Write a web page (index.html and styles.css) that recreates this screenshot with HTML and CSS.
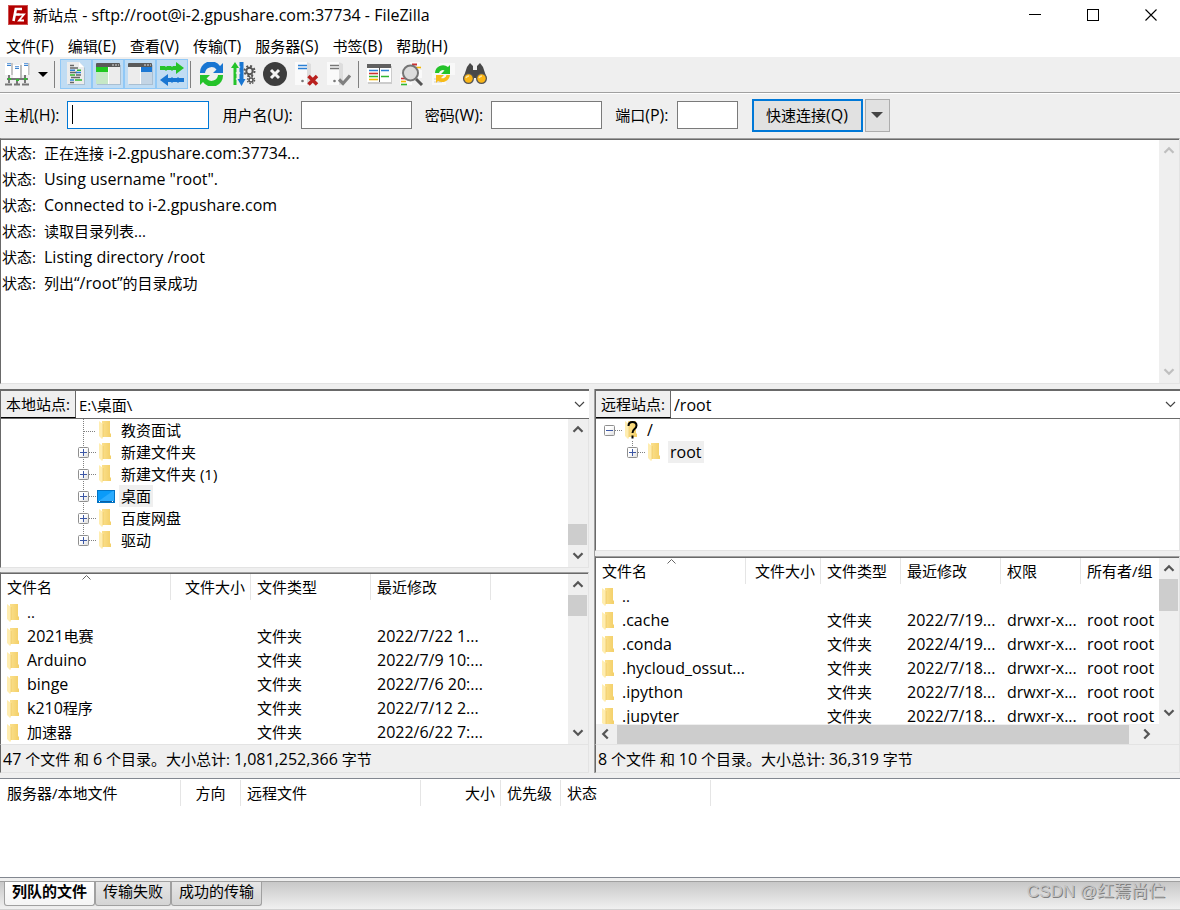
FILE: index.html
```html
<!DOCTYPE html>
<html lang="zh-CN">
<head>
<meta charset="utf-8">
<title>FileZilla</title>
<link rel="stylesheet" href="styles.css">
</head>
<body>
<svg class="defs" aria-hidden="true">
  <defs>
    <linearGradient id="gold" x1="0" x2="1" y1="0" y2="0"><stop offset="0" stop-color="#fbe08c"/><stop offset="1" stop-color="#f3cf68"/></linearGradient>
    <linearGradient id="screen" x1="0" x2="1" y1="0" y2="1"><stop offset="0.45" stop-color="#0a9bf9"/><stop offset="0.5" stop-color="#2bacff"/></linearGradient>
    <linearGradient id="box" x1="0" x2="1" y1="0" y2="1"><stop offset="0.4" stop-color="#fff"/><stop offset="1" stop-color="#dcdcdc"/></linearGradient>
  </defs>
  <symbol id="folder" viewBox="0 0 13 18"><path d="M3 0h8v12.500h1V16H3z" fill="url(#gold)"/><path d="M0 0l4 3v14l-1 1-3-3z" fill="#ffedb0"/><path d="M4 3v13" stroke="#e9bf55" stroke-width=".6"/></symbol>
  <symbol id="desktop" viewBox="0 0 18 13"><rect x=".5" y=".5" width="17" height="12" fill="url(#screen)" stroke="#0273c4"/><path d="M1 11.500h16" stroke="#0a5fa4" /><path d="M2 11.500h1M15 11.500h1" stroke="#fff"/></symbol>
  <symbol id="branch" viewBox="0 0 18 22"><path d="M5.500 0v22M6 12.500h12" fill="none" stroke="#808080" stroke-dasharray="1 1"/></symbol>
  <symbol id="plus" viewBox="0 0 18 22"><path d="M5.500 0v22M11 11.500h7" fill="none" stroke="#808080" stroke-dasharray="1 1"/><rect x=".5" y="6.500" width="10" height="10" rx="1" fill="url(#box)" stroke="#8f8f8f"/><path d="M2 11.500h7M5.500 8v7" stroke="#3c57a5"/></symbol>
  <symbol id="plus-last" viewBox="0 0 18 22"><path d="M5.500 0v7M11 11.500h7" fill="none" stroke="#808080" stroke-dasharray="1 1"/><rect x=".5" y="6.500" width="10" height="10" rx="1" fill="url(#box)" stroke="#8f8f8f"/><path d="M2 11.500h7M5.500 8v7" stroke="#3c57a5"/></symbol>
  <symbol id="minus" viewBox="0 0 18 22"><path d="M11 11.500h7" fill="none" stroke="#808080" stroke-dasharray="1 1"/><rect x=".5" y="6.500" width="10" height="10" rx="1" fill="url(#box)" stroke="#8f8f8f"/><path d="M2 11.500h7" stroke="#3c57a5"/></symbol>
  <symbol id="up" viewBox="0 0 10 8"><path d="M1 6l4-4 4 4" fill="none" stroke="currentColor" stroke-width="2"/></symbol>
  <symbol id="down" viewBox="0 0 10 8"><path d="M1 2l4 4 4-4" fill="none" stroke="currentColor" stroke-width="2"/></symbol>
  <symbol id="left" viewBox="0 0 8 10"><path d="M6 1L2 5l4 4" fill="none" stroke="currentColor" stroke-width="2"/></symbol>
  <symbol id="right" viewBox="0 0 8 10"><path d="M2 1l4 4-4 4" fill="none" stroke="currentColor" stroke-width="2"/></symbol>
  <symbol id="chevron" viewBox="0 0 11 7"><path d="M1 1l4.500 4.500L10 1" fill="none" stroke="#444" stroke-width="1.200"/></symbol>
  <symbol id="sort" viewBox="0 0 9 5"><path d="M.5 4.500l4-4 4 4" fill="none" stroke="#666"/></symbol>
  <symbol id="tri" viewBox="0 0 10 5"><path d="M0 0h10L5 5z" fill="currentColor"/></symbol>
</svg>

<header class="titlebar">
  <svg class="logo" width="20" height="20" viewBox="0 0 20 20"><rect width="20" height="20" fill="#b30000"/><rect x=".5" y=".5" width="19" height="19" fill="none" stroke="#e8a0a0" stroke-dasharray="1 1"/><path d="M5.500 16L7.800 4H14M6.500 9.500h5" fill="none" stroke="#fff" stroke-width="2.600"/><path d="M10.500 9.500h5.500l-5 6h5" fill="none" stroke="#fff" stroke-width="1.800"/></svg>
  <h1>新站点<span class="en"> - sftp://root@i-2.gpushare.com:37734 - FileZilla</span></h1>
  <button class="winbtn" aria-label="最小化"><svg width="12" height="12"><path d="M0 5.500h12" stroke="#000"/></svg></button>
  <button class="winbtn" aria-label="最大化"><svg width="12" height="12"><rect x=".5" y=".5" width="11" height="11" fill="none" stroke="#000"/></svg></button>
  <button class="winbtn" aria-label="关闭"><svg width="12" height="12"><path d="M.5.500l11 11M11.500.500l-11 11" stroke="#000" stroke-width="1.100"/></svg></button>
</header>

<nav class="menubar">
  <button>文件<span class="en">(F)</span></button><button>编辑<span class="en">(E)</span></button><button>查看<span class="en">(V)</span></button><button>传输<span class="en">(T)</span></button><button>服务器<span class="en">(S)</span></button><button>书签<span class="en">(B)</span></button><button>帮助<span class="en">(H)</span></button>
</nav>

<div class="toolbar" role="toolbar">
  <button class="site" aria-label="站点管理器">
    <svg width="25" height="24" viewBox="0 0 25 24"><path d="M0 1h7v12H0zM17 1h7v12h-7z" fill="#fff"/><path d="M6 1h2v12H6zM23 1h1.500v12H23z" fill="#c4c4c4"/><path d="M8 3h8v14H8z" fill="#fff"/><path d="M15 3h2v14h-2z" fill="#bbb"/><path d="M2 3.500h4M19 3.500h4M10 6.500h4M2 1.800h4M19 1.800h4M10 4.800h4" stroke="#3d83cf" stroke-width="1.100"/><path d="M4 13v8M20 13v8M12 17v5" stroke="#777" stroke-width="2"/><path d="M2 17h21M0 22.500h7M9 22.500h6M17 22.500h7" stroke="#777" stroke-width="2"/><path d="M3 17h3M11 18h3M19 17h3" stroke="#35b735" stroke-width="2"/></svg>
    <svg width="10" height="5"><use href="#tri"/></svg>
  </button>
  <i class="sep"></i>
  <button class="tool on" aria-label="消息日志"><svg width="24" height="24" viewBox="0 0 24 24"><path d="M4 1h12l5 5v17H4z" fill="#a9bfd2"/><path d="M3 0h12l5 5v17H3z" fill="#ececec"/><path d="M15 0v5h5z" fill="#fff"/><g stroke-width="1.600" fill="none"><path d="M6 3.500h4M6 6h8M12 13h5M6 10.500h7" stroke="#666"/><path d="M6 8.200h5M12 10.500h5M6 18h4" stroke="#2b80d5"/><path d="M13 8.200h4M6 13h5M11 18h7" stroke="#31b731"/><path d="M7 15.500h9M6 20.500h4" stroke="#666"/></g></svg></button>
  <button class="tool on" aria-label="本地目录树"><svg width="25" height="22" viewBox="0 0 25 22"><path d="M1 2h24v20H1z" fill="#a9bfd2"/><path d="M0 1h24v20H0z" fill="#ececec"/><path d="M0 1q0-1 1-1h22q1 0 1 1v3H0z" fill="#5a5a5a"/><path d="M16 2h2M19 2h2M22 2h1" stroke="#ddd"/><path d="M0 4h12v5H0z" fill="#20c820"/><path d="M0 9h12v12H0z" fill="#c6e8c6"/><path d="M12.500 4v17" stroke="#fff"/></svg></button>
  <button class="tool on" aria-label="远程目录树"><svg width="25" height="22" viewBox="0 0 25 22"><path d="M1 2h24v20H1z" fill="#a9bfd2"/><path d="M0 1h24v20H0z" fill="#ececec"/><path d="M0 1q0-1 1-1h22q1 0 1 1v3H0z" fill="#5a5a5a"/><path d="M16 2h2M19 2h2M22 2h1" stroke="#ddd"/><path d="M13 4h11v5H13z" fill="#1c78d4"/><path d="M13 9h11v12H13z" fill="#c4d5e5"/><path d="M12.500 4v17" stroke="#fff"/></svg></button>
  <button class="tool on" aria-label="传输队列"><svg width="26" height="24" viewBox="0 0 26 24"><path d="M1 4h5l1 1 1-1h4l1 1 1-1h3V0l8 6-8 6V8h-3l-1 1-1-1H8L7 9 6 8H1z" fill="#25c32a"/><path d="M25 20h-5l-1 1-1-1h-4l-1 1-1-1H9v4l-8-6 8-6v4h3l1-1 1 1h4l1-1 1 1h5z" fill="#1976d2"/></svg></button>
  <i class="sep tight"></i>
  <button class="tool" aria-label="刷新"><svg width="25" height="24" viewBox="0 0 25 24"><path d="M1 11A11 11 0 0 1 21 4l3-3v10H14l3.500-3.500A6.500 6.500 0 0 0 6 11z" fill="#1976d2"/><path d="M24 13A11 11 0 0 1 4 20l-3 3V13h10l-3.500 3.500A6.500 6.500 0 0 0 19 13z" fill="#25c32a"/></svg></button>
  <button class="tool" aria-label="处理队列"><svg width="25" height="24" viewBox="0 0 25 24"><path d="M2.500 23V6H0l4-6 4 6H5.500v4l-1 1 1 1v4l-1 1 1 1v5z" fill="#25c32a"/><path d="M8.500 0v4l1 1-1 1v4l1 1-1 1v5H6.500l4 7 4-7h-2V0z" fill="#1976d2"/><circle cx="18.500" cy="9" r="3.200" fill="none" stroke="#555" stroke-width="2"/><circle cx="18.500" cy="9" r="5" fill="none" stroke="#555" stroke-width="2" stroke-dasharray="2 1.930"/><circle cx="20" cy="18" r="2" fill="none" stroke="#555" stroke-width="1.600"/><circle cx="20" cy="18" r="3.500" fill="none" stroke="#555" stroke-width="1.500" stroke-dasharray="1.500 1.250"/></svg></button>
  <button class="tool" aria-label="取消"><svg width="24" height="24" viewBox="0 0 24 24"><circle cx="12" cy="12" r="12" fill="#3d3d3d"/><path d="M8 8l8 8M16 8l-8 8" stroke="#f4f4f4" stroke-width="3"/></svg></button>
  <button class="tool" aria-label="断开"><svg width="24" height="24" viewBox="0 0 24 24"><path d="M0 0h13v23H0z" fill="#fafafa"/><path d="M12 0l4 2v21h-4z" fill="#ddd"/><path d="M3 3.500h9M3 6.500h9" stroke="#2b80d5" stroke-width="1.600"/><circle cx="7.500" cy="19" r="1.300" fill="#777"/><path d="M13.500 14l8.500 8.500M22 14l-8.500 8.500" stroke="#b9201e" stroke-width="3.500"/></svg></button>
  <button class="tool" aria-label="重新连接"><svg width="24" height="24" viewBox="0 0 24 24"><path d="M0 0h13v23H0z" fill="#fafafa"/><path d="M12 0l4 2v21h-4z" fill="#ddd"/><path d="M3 3.500h9M3 6.500h9" stroke="#777" stroke-width="1.600"/><circle cx="7.500" cy="19" r="1.300" fill="#777"/><path d="M12 17.500l4 4 7-8" fill="none" stroke="#808080" stroke-width="3.200"/></svg></button>
  <i class="sep third"></i>
  <button class="tool" aria-label="过滤器"><svg width="25" height="20" viewBox="0 0 25 20"><path d="M1 2h24v18H1z" fill="#ccc"/><path d="M0 1h24v17H0z" fill="#fff"/><path d="M0 0h24v4H0z" fill="#606060"/><g stroke-width="1.600"><path d="M2 6.500h9M14 6.500h8" stroke="#2b80d5"/><path d="M2 9.500h9" stroke="#c33"/><path d="M2 12.500h9M14 12.500h8" stroke="#31b731"/><path d="M2 15.500h9" stroke="#f5b800"/></g><path d="M12.500 3v15" stroke="#555"/></svg></button>
  <button class="tool" aria-label="比较目录"><svg width="25" height="24" viewBox="0 0 25 24"><path d="M11 0h10v8h2v8H11zM1 12h12v11H1z" fill="#fafafa"/><path d="M13 2.500h5" stroke="#c33" stroke-width="2"/><path d="M17 5.500h5" stroke="#f5b800" stroke-width="1.600"/><path d="M2 16.500h5" stroke="#c33" stroke-width="1.600"/><path d="M2 19.500h5" stroke="#f5b800" stroke-width="1.600"/><path d="M2 22.500h6" stroke="#31b731" stroke-width="1.600"/><path d="M17 17l6 6" stroke="#555" stroke-width="3"/><circle cx="11.500" cy="11" r="7.500" fill="#dcdcdc" stroke="#757575" stroke-width="2"/></svg></button>
  <button class="tool" aria-label="同步浏览"><svg width="25" height="24" viewBox="0 0 25 24"><path d="M8 1h16v12H8zM1 11h14v12H1z" fill="#f8f8f8"/><path d="M3 17h6M3 20h8" stroke="#ccc"/><path d="M4 11A8 8 0 0 1 17 5l2-2v9h-9l3.500-3.500A4 4 0 0 0 8 11z" fill="#25c32a"/><path d="M19 13A8 8 0 0 1 7 19l-2 2v-8h8l-3 3A4 4 0 0 0 15.500 13z" fill="#f7bb19"/></svg></button>
  <button class="tool" aria-label="搜索"><svg width="24" height="22" viewBox="0 0 24 22"><path d="M7 0l3 3v4h4V3l3-3 3 4 4 12-6 4-5-5h-2l-5 5-6-4L4 4z" fill="#484848"/><circle cx="5.500" cy="15.500" r="5.500" fill="#555"/><circle cx="18.500" cy="15.500" r="5.500" fill="#555"/><circle cx="5.500" cy="15.500" r="4.200" fill="#fbb616"/><circle cx="18.500" cy="15.500" r="4.200" fill="#fbb616"/><path d="M3 15a3 3 0 0 1 3-2M16 15a3 3 0 0 1 3-2" fill="none" stroke="#ffe59c" stroke-width="1.500"/></svg></button>
</div>

<form class="quick">
  <label for="host">主机<span class="en">(H):</span></label><span class="hostbox"><input id="host" type="text"><i class="caret"></i></span>
  <label for="user">用户名<span class="en">(U):</span></label><input id="user" class="medium" type="text">
  <label for="pass">密码<span class="en">(W):</span></label><input id="pass" class="medium" type="password">
  <label for="port">端口<span class="en">(P):</span></label><input id="port" class="small" type="text">
  <button type="button" class="connect">快速连接<span class="en">(Q)</span></button><button type="button" class="history" aria-label="历史"><svg width="12" height="6" viewBox="0 0 10 5"><use href="#tri"/></svg></button>
</form>

<section class="log sunken">
  <dl>
    <div><dt>状态:</dt><dd>正在连接<span class="en"> i-2.gpushare.com:37734...</span></dd></div>
    <div><dt>状态:</dt><dd class="en">Using username "root".</dd></div>
    <div><dt>状态:</dt><dd class="en">Connected to i-2.gpushare.com</dd></div>
    <div><dt>状态:</dt><dd>读取目录列表...</dd></div>
    <div><dt>状态:</dt><dd class="en">Listing directory /root</dd></div>
    <div><dt>状态:</dt><dd>列出<span class="en">“/root”</span>的目录成功</dd></div>
  </dl>
  <div class="vbar off"><svg width="12" height="9"><use href="#up"/></svg><svg width="12" height="9"><use href="#down"/></svg></div>
</section>

<main class="panes">
  <section class="pane local">
    <div class="sitebar"><label for="lsite">本地站点:</label><select id="lsite"><option>E:\桌面\</option></select><svg width="11" height="7"><use href="#chevron"/></svg></div>
    <div class="treebox">
      <ul class="tree">
        <li><svg width="18" height="22"><use href="#branch"/></svg><svg class="ico" width="18" height="18"><use href="#folder" x="2" width="13"/></svg><span>教资面试</span></li>
        <li><svg width="18" height="22"><use href="#plus"/></svg><svg class="ico" width="18" height="18"><use href="#folder" x="2" width="13"/></svg><span>新建文件夹</span></li>
        <li><svg width="18" height="22"><use href="#plus"/></svg><svg class="ico" width="18" height="18"><use href="#folder" x="2" width="13"/></svg><span>新建文件夹 (1)</span></li>
        <li><svg width="18" height="22"><use href="#plus"/></svg><svg class="ico" width="18" height="13"><use href="#desktop"/></svg><span class="sel">桌面</span></li>
        <li><svg width="18" height="22"><use href="#plus"/></svg><svg class="ico" width="18" height="18"><use href="#folder" x="2" width="13"/></svg><span>百度网盘</span></li>
        <li><svg width="18" height="22"><use href="#plus-last"/></svg><svg class="ico" width="18" height="18"><use href="#folder" x="2" width="13"/></svg><span>驱动</span></li>
      </ul>
      <div class="vbar"><svg width="12" height="9"><use href="#up"/></svg><i class="thumb low"></i><svg width="12" height="9"><use href="#down"/></svg></div>
    </div>
    <div class="listbox sunken">
      <div class="clip">
        <table>
          <colgroup><col class="c170"><col class="c80"><col class="c120"><col class="c120"><col></colgroup>
          <thead><tr><th>文件名<svg class="sort" width="9" height="5"><use href="#sort"/></svg></th><th class="r">文件大小</th><th>文件类型</th><th>最近修改</th><th class="rest"></th></tr></thead>
          <tbody>
            <tr><td><svg width="13" height="18"><use href="#folder"/></svg>..</td><td></td><td></td><td></td><td></td></tr>
            <tr><td><svg width="13" height="18"><use href="#folder"/></svg><span class="en">2021</span>电赛</td><td></td><td>文件夹</td><td class="en">2022/7/22 1...</td><td></td></tr>
            <tr><td class="en"><svg width="13" height="18"><use href="#folder"/></svg>Arduino</td><td></td><td>文件夹</td><td class="en">2022/7/9 10:...</td><td></td></tr>
            <tr><td class="en"><svg width="13" height="18"><use href="#folder"/></svg>binge</td><td></td><td>文件夹</td><td class="en">2022/7/6 20:...</td><td></td></tr>
            <tr><td><svg width="13" height="18"><use href="#folder"/></svg><span class="en">k210</span>程序</td><td></td><td>文件夹</td><td class="en">2022/7/12 2...</td><td></td></tr>
            <tr><td><svg width="13" height="18"><use href="#folder"/></svg>加速器</td><td></td><td>文件夹</td><td class="en">2022/6/22 7:...</td><td></td></tr>
          </tbody>
        </table>
      </div>
      <div class="vbar"><svg width="12" height="9"><use href="#up"/></svg><i class="thumb"></i><svg width="12" height="9"><use href="#down"/></svg></div>
    </div>
    <p class="status"><span class="en">47</span> 个文件 和 <span class="en">6</span> 个目录。大小总计: <span class="en">1,081,252,366</span> 字节</p>
  </section>

  <section class="pane remote">
    <div class="sitebar"><label for="rsite">远程站点:</label><select id="rsite" class="en"><option>/root</option></select><svg width="11" height="7"><use href="#chevron"/></svg></div>
    <div class="treebox">
      <ul class="tree">
        <li><svg width="18" height="22"><use href="#minus"/></svg><svg class="ico" width="18" height="18"><use href="#folder" x="2" width="13"/><path d="M5.500 5q0-4 4-4t4 3.500q0 2-2 3.500T9.500 12M9.500 14.500v3" fill="none" stroke="#000" stroke-width="2"/></svg><span class="en">/</span></li>
        <li class="child"><svg width="18" height="22"><use href="#plus-last"/></svg><svg class="ico" width="18" height="18"><use href="#folder" x="2" width="13"/></svg><span class="sel en">root</span></li>
      </ul>
    </div>
    <div class="listbox sunken">
      <div class="scrollarea">
        <div class="clip">
          <table>
            <colgroup><col class="c150"><col class="c75"><col class="c80"><col class="c100"><col class="c80"><col></colgroup>
            <thead><tr><th>文件名<svg class="sort" width="9" height="5"><use href="#sort"/></svg></th><th class="r">文件大小</th><th>文件类型</th><th>最近修改</th><th>权限</th><th class="rest">所有者/组</th></tr></thead>
            <tbody>
              <tr><td><svg width="13" height="18"><use href="#folder"/></svg>..</td><td></td><td></td><td></td><td></td><td></td></tr>
              <tr class="en"><td><svg width="13" height="18"><use href="#folder"/></svg>.cache</td><td></td><td class="zh">文件夹</td><td>2022/7/19...</td><td>drwxr-x...</td><td>root root</td></tr>
              <tr class="en"><td><svg width="13" height="18"><use href="#folder"/></svg>.conda</td><td></td><td class="zh">文件夹</td><td>2022/4/19...</td><td>drwxr-x...</td><td>root root</td></tr>
              <tr class="en"><td><svg width="13" height="18"><use href="#folder"/></svg>.hycloud_ossut...</td><td></td><td class="zh">文件夹</td><td>2022/7/18...</td><td>drwxr-x...</td><td>root root</td></tr>
              <tr class="en"><td><svg width="13" height="18"><use href="#folder"/></svg>.ipython</td><td></td><td class="zh">文件夹</td><td>2022/7/18...</td><td>drwxr-x...</td><td>root root</td></tr>
              <tr class="en"><td><svg width="13" height="18"><use href="#folder"/></svg>.jupyter</td><td></td><td class="zh">文件夹</td><td>2022/7/18...</td><td>drwxr-x...</td><td>root root</td></tr>
            </tbody>
          </table>
        </div>
        <div class="vbar"><svg width="12" height="9"><use href="#up"/></svg><i class="thumb tall"></i><svg width="12" height="9"><use href="#down"/></svg></div>
      </div>
      <div class="hbar"><svg width="9" height="12"><use href="#left"/></svg><i></i><svg width="9" height="12"><use href="#right"/></svg></div>
    </div>
    <p class="status"><span class="en">8</span> 个文件 和 <span class="en">10</span> 个目录。大小总计: <span class="en">36,319</span> 字节</p>
  </section>
</main>

<section class="queue">
  <table>
    <colgroup><col class="c180"><col class="c60"><col class="c180"><col class="c80"><col class="c60"><col class="c150"><col></colgroup>
    <thead><tr><th>服务器/本地文件</th><th class="mid">方向</th><th>远程文件</th><th class="r">大小</th><th>优先级</th><th>状态</th><th class="rest"></th></tr></thead>
  </table>
</section>

<footer class="tabs">
  <button class="active">列队的文件</button><button>传输失败</button><button>成功的传输</button>
  <span class="mark">CSDN @红蔫尚伫</span>
</footer>
</body>
</html>
```

FILE: styles.css
```css
* { box-sizing: border-box; }

body {
  margin: 0;
  height: 100vh;
  display: flex;
  flex-direction: column;
  overflow: hidden;
  background: #efefef;
  color: #000;
  font: 15px/22px "Open Sans", "Noto Sans CJK SC", sans-serif;
}

button, input, select { font: inherit; color: inherit; margin: 0; padding: 0; }
button { border: 0; background: none; }
h1, p, dl, dd, ul { margin: 0; padding: 0; }
svg { flex: none; display: block; }
.defs { position: absolute; width: 0; height: 0; }
.en, select.en { font-size: 16px; white-space: pre; }
.zh { font-size: 15px; }

.titlebar { display: flex; align-items: center; height: 32px; padding: 0 0 2px 8px; background: #fff; }
.titlebar h1 { flex: 1; margin-left: 5px; font-size: 15px; font-weight: 400; }
.winbtn { width: 58px; height: 30px; display: flex; align-items: center; justify-content: center; }

.menubar { display: flex; gap: 14px; height: 25px; padding: 3px 6px 0; background: #fff; }
.menubar button { white-space: nowrap; height: 22px; }

.toolbar { display: flex; align-items: center; height: 36px; padding: 0 5px 1px; border-bottom: 1px solid #a0a0a0; box-shadow: 0 1px #fff; }
.site { display: flex; align-items: center; gap: 8px; }
.sep { width: 1px; height: 27px; margin: 0 5px 0 6px; background: #808080; }
.sep.tight { margin: 0 4px 0 2px; }
.sep.third { margin: 0 4px 0 3px; }
.tool { width: 32px; height: 30px; display: flex; align-items: center; justify-content: center; }
.tool.on { background: #c0dcf3; border: 1px solid #90c8f6; }

.quick { display: flex; align-items: center; height: 45px; padding: 0 0 1px 4px; }
.quick label { white-space: nowrap; margin-right: 8px; }
.quick input { height: 28px; border: 1px solid #7a7a7a; background: #fff; padding: 0 4px; margin-right: 13px; }
.hostbox { position: relative; display: flex; }
.quick .hostbox input { width: 142px; border-color: #0078d7; }
.caret { position: absolute; left: 5px; top: 4px; width: 1px; height: 19px; background: #000; }
.quick .medium { width: 111px; }
.quick .small { width: 61px; margin-right: 14px; }
.connect { width: 111px; height: 33px; border: 2px solid #0078d7; background: #e1e1e1; }
.history { width: 25px; height: 33px; margin-left: 2px; border: 1px solid #adadad; background: #e1e1e1; color: #444; display: flex; align-items: center; justify-content: center; }

.sunken { border-top: 1px solid #a0a0a0; border-left: 1px solid #696969; border-right: 1px solid #e3e3e3; border-bottom: 1px solid #e3e3e3; box-shadow: inset 0 1px #696969; }
.log { flex: 243 1 0; min-height: 0; display: flex; padding-top: 1px; background: #fff; }
.log dl { flex: 1; padding: 0 1px; }
.log dl div { display: flex; height: 26px; line-height: 26px; }
.log dt { width: 42px; }

.vbar { width: 20px; flex: none; display: flex; flex-direction: column; align-items: center; justify-content: space-between; padding: 6px 1px 7px 0; background: #efefef; color: #555; }
.vbar.off { color: #bfbfbf; }
.thumb { width: 19px; height: 21px; margin: 6px 0 auto; background: #cdcdcd; }
.thumb.low { margin: auto 0 6px; }
.thumb.tall { height: 32px; }

.panes { flex: 384 1 0; min-height: 0; display: grid; grid-template-columns: 589fr 586fr; gap: 5px; margin: 5px 0; }
.pane { min-width: 0; min-height: 0; display: flex; flex-direction: column; }
.remote { border-left: 1px solid #a0a0a0; }

.sitebar { display: flex; align-items: center; height: 30px; flex: none; border: 1px solid #696969; border-width: 2px 0 1px 1px; background: #fff; }
.sitebar label { width: 75px; height: 100%; padding-left: 5px; line-height: 27px; background: #efefef; border-right: 1px solid #696969; border-bottom: 1px solid #000; white-space: nowrap; }
.sitebar select { flex: 1; min-width: 0; height: 100%; padding: 0 0 0 3px; border: 0; background: #fff; appearance: none; }
.sitebar > svg { margin-right: 4px; pointer-events: none; }

.treebox { display: flex; min-height: 0; background: #fff; border: 1px solid #e3e3e3; border-top: 0; border-left-color: #696969; }
.local .treebox { flex: 148 1 0; margin-bottom: 4px; }
.remote .treebox { flex: 131 1 0; margin-bottom: 5px; }
.tree { flex: 1; overflow: hidden; list-style: none; padding: 0 0 0 77px; }
.remote .tree { padding-left: 8px; }
.tree li { display: flex; align-items: center; height: 22px; }
.tree .child { margin-left: 23px; }
.ico { margin: 0 4px 0 1px; }
.tree span { padding: 0 2px; white-space: nowrap; }
.sel { background: #efefef; }

.listbox { display: flex; min-height: 0; background: #fff; padding-top: 1px; }
.local .listbox { flex: 170 1 0; }
.remote .listbox { flex: 186 1 0; flex-direction: column; }
.scrollarea { flex: 1; min-height: 0; display: flex; }
.clip { flex: 1; min-width: 0; overflow: hidden; }

table { width: 100%; table-layout: fixed; border-collapse: separate; border-spacing: 0; }
th, td { padding: 0 6px; font-weight: 400; text-align: left; white-space: nowrap; overflow: hidden; }
th { position: relative; height: 26px; border-right: 1px solid #e5e5e5; }
th.rest { border: 0; }
th.r { text-align: right; padding-right: 5px; }
th.mid { text-align: center; }
td { height: 24px; }
td svg { float: left; margin: 3px 7px 0 0; }
td:last-child, th.rest { padding-right: 0; }
.sort { position: absolute; left: 50%; top: 1px; margin-left: -4px; }
.c60 { width: 60px; }
.c75 { width: 75px; }
.c80 { width: 80px; }
.c100 { width: 100px; }
.c120 { width: 120px; }
.c150 { width: 150px; }
.c170 { width: 170px; }
.c180 { width: 180px; }

.hbar { display: flex; align-items: center; height: 20px; flex: none; padding: 0 28px 0 5px; gap: 7px; background: #efefef; color: #555; }
.hbar i { flex: 1; height: 19px; margin-right: 6px; background: #cdcdcd; }

.status { flex: none; height: 28px; padding: 3px 2px 0; border-left: 1px solid #696969; border-right: 1px solid #e3e3e3; border-bottom: 1px solid #e3e3e3; white-space: nowrap; }

.queue { flex: 97 1 0; min-height: 0; background: #fff; border-top: 1px solid #828790; border-bottom: 1px solid #828790; padding: 1px 0 0 1px; }

.tabs { position: relative; display: flex; align-items: flex-start; height: 29px; flex: none; margin-top: 3px; padding-left: 4px; border-top: 1px solid #a0a0a0; border-bottom: 1px solid #d0d0d0; background: linear-gradient(#c8c8c8, #f0f0f0); }
.tabs button { height: 24px; padding: 0 7px 5px; line-height: 19px; border: 1px solid #a0a0a0; border-top: 0; border-radius: 0 0 3px 3px; background: linear-gradient(#e6e6e6, #d4d4d4); white-space: nowrap; }
.tabs .active { font-weight: 700; background: linear-gradient(#fff, #f4f4f4); }
.mark { position: absolute; right: 15px; top: -2px; font: 17px/24px "Liberation Sans", "Noto Sans CJK SC", sans-serif; color: #c4c4c4; text-shadow: 1px 1px #808080; }
```
